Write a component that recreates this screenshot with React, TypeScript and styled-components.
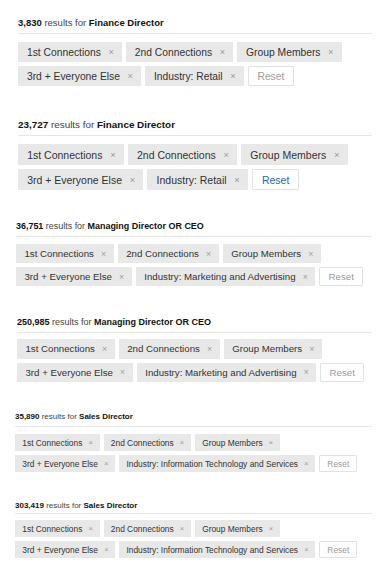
import React from 'react';
import styled, { createGlobalStyle } from 'styled-components';

type BlockProps = {
  $top: number;
  $left: number;
  $fs: number;
  $hs: number;
  $lh: number;
  $pb: number;
  $gap: number;
  $chipH: number;
};

type Filter = {
  count: string;
  query: string;
  industry: string;
  activeReset?: boolean;
  top: number;
  left: number;
  fs: number;
  hs: number;
  lh: number;
  pb: number;
  gap: number;
  chipH: number;
};

const GlobalStyle = createGlobalStyle`
  html, body {
    margin: 0;
    padding: 0;
    background: #ffffff;
  }
  body {
    font-family: "Liberation Sans", Arial, Helvetica, sans-serif;
    color: #333333;
  }
`;

const filters: Filter[] = [
  { count: '3,830', query: 'Finance Director', industry: 'Retail', top: 17, left: 18, fs: 10.3, hs: 9.5, lh: 12, pb: 4, gap: 8, chipH: 20 },
  { count: '23,727', query: 'Finance Director', industry: 'Retail', activeReset: true, top: 33, left: 18, fs: 10.5, hs: 9.9, lh: 12, pb: 4, gap: 8, chipH: 21 },
  { count: '36,751', query: 'Managing Director OR CEO', industry: 'Marketing and Advertising', top: 30, left: 16, fs: 9.7, hs: 8.95, lh: 12, pb: 4, gap: 7, chipH: 19 },
  { count: '250,985', query: 'Managing Director OR CEO', industry: 'Marketing and Advertising', top: 30, left: 17, fs: 9.7, hs: 9, lh: 12, pb: 4, gap: 6, chipH: 19.5 },
  { count: '35,890', query: 'Sales Director', industry: 'Information Technology and Services', top: 30, left: 15, fs: 8.4, hs: 8, lh: 10, pb: 4, gap: 7, chipH: 17 },
  { count: '303,419', query: 'Sales Director', industry: 'Information Technology and Services', top: 29, left: 15, fs: 8.4, hs: 8, lh: 10, pb: 2, gap: 6, chipH: 17 },
];

const Page = () => (
  <>
    <GlobalStyle />
    <List>
      {filters.map(f => (
        <Block
          key={f.count}
          $top={f.top}
          $left={f.left}
          $fs={f.fs}
          $hs={f.hs}
          $lh={f.lh}
          $pb={f.pb}
          $gap={f.gap}
          $chipH={f.chipH}
        >
          <Heading>
            <b>{f.count}</b> results for <b>{f.query}</b>
          </Heading>
          <Chips>
            <Chip>1st Connections<Remove>×</Remove></Chip>
            <Chip>2nd Connections<Remove>×</Remove></Chip>
            <Chip>Group Members<Remove>×</Remove></Chip>
            <Chip>3rd + Everyone Else<Remove>×</Remove></Chip>
            <Chip>Industry: {f.industry}<Remove>×</Remove></Chip>
            <ResetButton $active={f.activeReset}>Reset</ResetButton>
          </Chips>
        </Block>
      ))}
    </List>
  </>
);

const List = styled.div`
  width: 384px;
  display: flex;
  flex-direction: column;
`;

const Block = styled.section<BlockProps>`
  --chip-h: ${p => p.$chipH}px;
  --head-size: ${p => p.$hs}px;
  --head-lh: ${p => p.$lh}px;
  --head-pb: ${p => p.$pb}px;
  --list-gap: ${p => p.$gap}px;
  padding: ${p => p.$top}px 12px 0 ${p => p.$left}px;
  font-size: ${p => p.$fs}px;
`;

const Heading = styled.h2`
  margin: 0;
  font-size: var(--head-size);
  line-height: var(--head-lh);
  font-weight: normal;
  color: #444444;
  padding-bottom: var(--head-pb);
  border-bottom: 1px solid #e6e6e6;
  white-space: nowrap;

  b {
    color: #111111;
    font-weight: bold;
  }
`;

const Chips = styled.div`
  display: flex;
  flex-wrap: wrap;
  gap: 4px;
  margin-top: var(--list-gap);
`;

const Chip = styled.span`
  height: var(--chip-h);
  box-sizing: border-box;
  display: inline-flex;
  align-items: center;
  padding: 0 0.78em 0 0.87em;
  background: #e8e8e8;
  color: #333333;
  white-space: nowrap;
`;

const Remove = styled.span`
  margin-left: 0.82em;
  color: #9a9a9a;
  font-size: 0.9em;
`;

const ResetButton = styled.button<{ $active?: boolean }>`
  height: var(--chip-h);
  box-sizing: border-box;
  padding: 0 0.85em;
  background: #ffffff;
  border: 1px solid #e2e2e2;
  border-radius: 1px;
  font-family: inherit;
  font-size: 1em;
  color: ${p => (p.$active ? '#1f69a4' : '#9c9c9c')};
  cursor: pointer;
`;

export default Page;
